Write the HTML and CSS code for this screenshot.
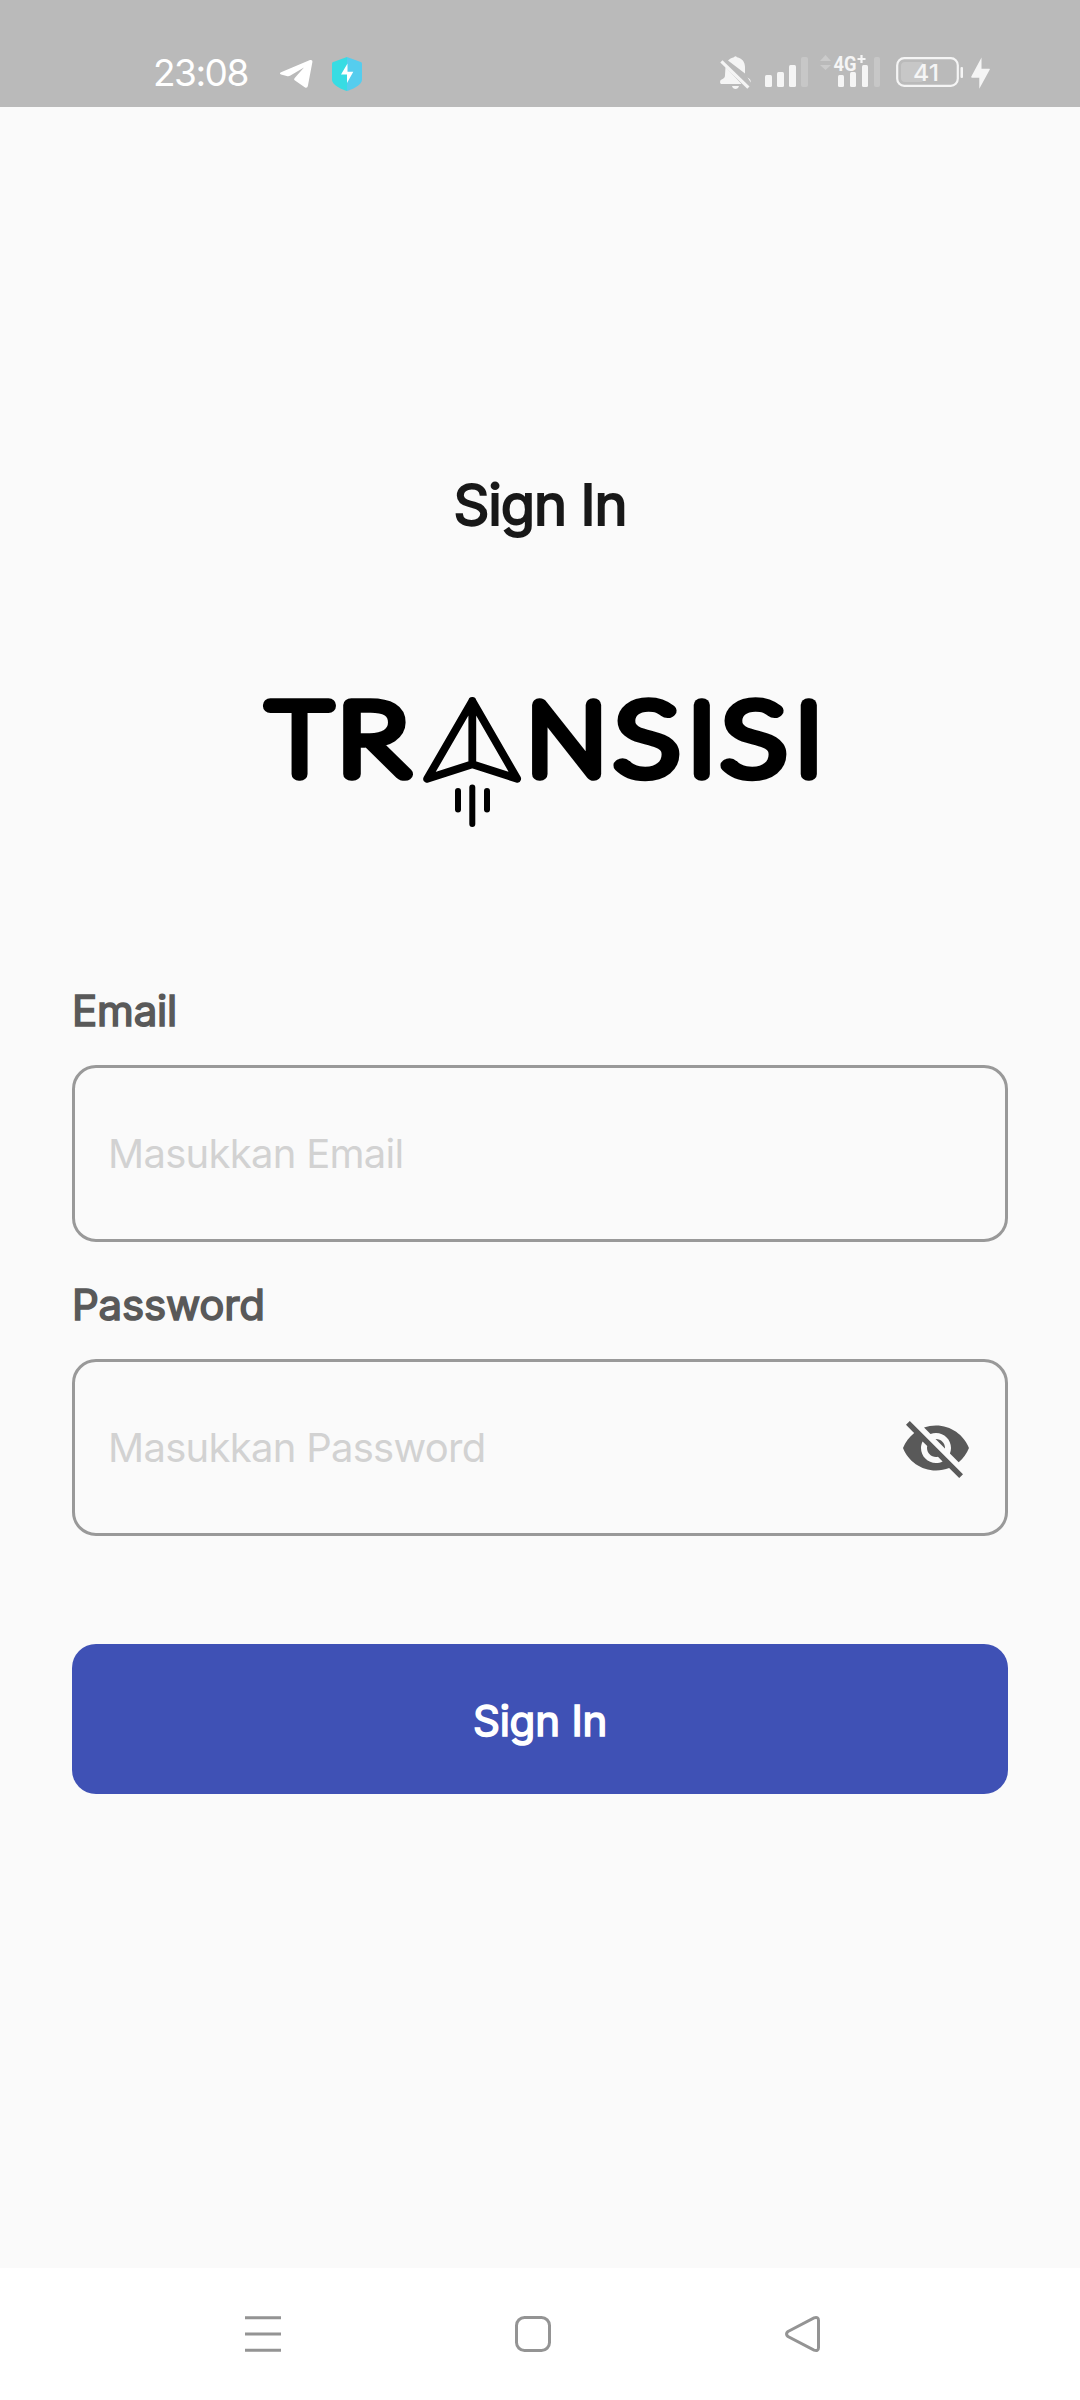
FILE: index.html
```html
<!DOCTYPE html>
<html lang="id">
<head>
<meta charset="utf-8">
<title>Sign In</title>
<link rel="stylesheet" href="styles.css">
</head>
<body>
<div class="screen">
  <header class="status">
    <span class="clock">23:08</span>
    <svg class="ic-telegram" width="34" height="32" viewBox="0 0 34 32"><path fill="#fff" d="M2 13.2 31 1.1c1.5-.6 2.7.2 2.4 2l-4.5 23.7c-.4 1.9-1.6 2.4-3.2 1.4L16 21.500c-1.200-.8-1-1.800-.3-2.600l9.300-10.300-14 8.100c-1.200.6-2.200.6-3.300.2L2 15.400c-1.400-.6-1.300-1.600 0-2.200z"/></svg>
    <svg class="ic-shield" width="30" height="34" viewBox="0 0 30 34"><path fill="#37dce3" d="M15 0v34C11 33 0 28 0 23V7C0 5.600.5 5.200 2 4.700z"/><path fill="#55cdee" d="M15 0v34c4-1 15-6 15-11V7c0-1.400-.5-1.800-2-2.300z"/><path fill="#fff" d="M15.500 6.500 9 17.500h6V26l6.300-11.200H15.500z"/></svg>
    <div class="status-right">
      <svg width="31" height="34" viewBox="0 0 31 34"><path fill="#f5f5f5" d="M8 5.500C10 3.500 12 2.600 14 2.200a2 2 0 0 1 3 0C22 3 25 7 25 12v6.500zM5.500 12 21.500 29H1.200C-.2 29-.2 26 .7 25c3-1.500 4.300-2 4.300-5zM26.500 21c1 2.500 4.500 2 4.300 6.500zM12 31h7c-.8 4-6.200 4-7 0z"/><path stroke="#f5f5f5" stroke-width="3.200" d="m1.400 6.400 27 26.200"/></svg>
      <svg class="ic-signal" width="43" height="34" viewBox="0 0 43 34"><g fill="#f5f5f5"><rect y="20" width="7" height="12" rx="1.500"/><rect x="12" y="17" width="7" height="15" rx="1.500"/><rect x="24" y="10" width="7" height="22" rx="1.500"/></g><rect x="36" y="2" width="7" height="30" rx="2" fill="#c7c7c7"/></svg>
      <svg class="ic-data" width="60" height="36" viewBox="0 0 60 36"><path fill="#cbcbcb" d="m0 8 5.500-6L11 8zM0 12h11l-5.500 5z"/><rect x="54" y="4" width="6" height="30" rx="2" fill="#c7c7c7"/><g fill="#f5f5f5"><rect x="18" y="22" width="6" height="12" rx="1.500"/><rect x="30" y="19" width="6" height="15" rx="1.500"/><rect x="42" y="12" width="6" height="22" rx="1.500"/></g><text class="net" x="13.500" y="17.500" textLength="23" lengthAdjust="spacingAndGlyphs">4G</text><path stroke="#f5f5f5" stroke-width="2.200" d="M41.500 2v8M37.500 6h8"/></svg>
      <svg class="ic-battery" width="67" height="30" viewBox="0 0 67 30"><rect x="5" y="5" width="23" height="20" rx="4" fill="#c7c7c7"/><rect x="1.200" y="1.200" width="60.600" height="27.600" rx="7" fill="none" stroke="#f5f5f5" stroke-width="2.200"/><rect x="64.500" y="10" width="2.500" height="11" rx="1" fill="#f5f5f5"/><text class="pct" x="17" y="24" textLength="26" lengthAdjust="spacingAndGlyphs">41</text></svg>
      <svg class="ic-bolt" width="19" height="32" viewBox="0 0 19 32"><path fill="#f5f5f5" d="M10.500.5.300 19.500c-.3.700 0 1.200.7 1.200h7.300v11L18.700 12.800c.3-.7 0-1.100-.7-1.100h-7.500z"/></svg>
    </div>
  </header>

  <main class="content">
    <h1 class="title">Sign In</h1>
    <svg class="logo" width="600" height="160" viewBox="240 670 600 160">
      <g class="wordmark">
        <text transform="translate(268.800 774) scale(1.090 1)">T</text>
        <text transform="translate(337.500 774) scale(1.200 1)">R</text>
        <text transform="translate(527 774) scale(1.070 1)">N</text>
        <text transform="translate(615 774) scale(1.220 1)">S</text>
        <text transform="translate(688.500 774) scale(1.100 1)">I</text>
        <text transform="translate(722 774) scale(1.220 1)">S</text>
        <text transform="translate(795.500 774) scale(1.100 1)">I</text>
      </g>
      <g class="plane">
        <path d="M472.300 701 427.200 778.800 472.300 764.200 517.200 778.800zM472.300 701v63"/>
        <path class="trail" d="M458 791v18.500M472.300 787.500v36.500M487 791v18.500"/>
      </g>
    </svg>
    <label class="label" for="email">Email</label>
    <div class="field"><input id="email" type="text" placeholder="Masukkan Email"></div>
    <label class="label" for="password">Password</label>
    <div class="field">
      <input id="password" type="password" placeholder="Masukkan Password">
      <svg class="eye" width="72" height="72" viewBox="0 0 24 24"><path d="M12 7c2.760 0 5 2.240 5 5 0 .65-.13 1.260-.36 1.830l2.920 2.920c1.510-1.260 2.700-2.890 3.430-4.750-1.730-4.390-6-7.500-11-7.500-1.400 0-2.740.25-3.980.7l2.160 2.160C10.740 7.130 11.350 7 12 7zM2 4.270l2.280 2.280.46.46C3.080 8.300 1.780 10.020 1 12c1.730 4.390 6 7.500 11 7.500 1.550 0 3.030-.3 4.380-.84l.42.42L19.730 22 21 20.730 3.270 3 2 4.270zM7.530 9.800l1.550 1.550c-.05.21-.08.43-.08.65 0 1.660 1.340 3 3 3 .22 0 .44-.03.65-.08l1.550 1.550c-.67.33-1.410.53-2.200.53-2.760 0-5-2.240-5-5 0-.79.2-1.530.53-2.200zm4.310-.78l3.150 3.150.02-.16c0-1.660-1.340-3-3-3l-.17.01z"/></svg>
    </div>
    <button class="submit" type="button">Sign In</button>
  </main>

  <nav class="navbar">
    <svg width="36" height="36" viewBox="0 0 36 36"><path d="M0 1.700h36M0 18h36M0 34.300h36"/></svg>
    <svg width="36" height="36" viewBox="0 0 36 36"><rect x="1.500" y="1.500" width="33" height="33" rx="8"/></svg>
    <svg width="36" height="36" viewBox="0 0 36 36"><path d="M3 15.500 29 1.900q4.500-1.500 4.500 2.600v27q0 4.100-4.500 2.600L3 20.500q-3-2.500 0-5z"/></svg>
  </nav>
</div>
</body>
</html>
```
FILE: styles.css
```css
* { box-sizing: border-box; }
body { margin: 0; background: #fafafa; font-family: Inter, "Liberation Sans", sans-serif; }
.screen { width: 1080px; height: 2400px; display: flex; flex-direction: column; }
svg { display: block; flex: none; }

.status { height: 107px; flex: none; background: #bababa; display: flex; align-items: flex-start; padding: 55px 90px 0 153px; }
.clock { color: #fff; font-size: 37px; line-height: 36px; width: 126px; white-space: nowrap; letter-spacing: -1.500px; }
.ic-telegram { margin-top: 4px; }
.ic-shield { margin: 2px 0 0 19px; }
.status-right { margin-left: auto; display: flex; align-items: flex-start; }
.ic-signal { margin-left: 14px; }
.ic-data { margin: -2px 0 0 12px; }
.ic-battery { margin: 2px 0 0 16px; }
.ic-bolt { margin: 2px 0 0 8px; }
.net { font: 700 20px Roboto, sans-serif; fill: #f5f5f5; stroke: #bababa; stroke-width: 1.5px; paint-order: stroke; }
.pct { font: 500 23px Inter, sans-serif; fill: #f5f5f5; }

.content { flex: 1; padding: 0 72px; display: flex; flex-direction: column; }
.title { margin: 364px 0 0; text-align: center; font-size: 56px; line-height: 68px; font-weight: 400; letter-spacing: -1.100px; color: #181818; -webkit-text-stroke: 2px #181818; }
.logo { align-self: center; margin-top: 131px; }
.wordmark { font: 100 99px Lato, sans-serif; fill: #000; stroke: #000; stroke-width: 13.500px; stroke-linejoin: round; }
.plane { fill: none; stroke: #000; stroke-width: 7.800px; stroke-linejoin: round; stroke-linecap: round; }
.trail { stroke-width: 6px; }
.label { font-size: 42px; line-height: 52px; letter-spacing: -.2px; color: #595959; -webkit-text-stroke: 1.600px #595959; }
.logo + .label { margin-top: 155px; }
.field { height: 177px; margin-top: 28px; border: 3px solid #999; border-radius: 24px; display: flex; align-items: center; padding: 0 33px; }
.field + .label { margin-top: 37px; }
.field input { flex: 1; min-width: 0; border: 0; outline: 0; padding: 0; background: transparent; font: 400 40px Inter, sans-serif; letter-spacing: -.72px; color: #181818; }
.field input::placeholder { color: #d2d2d2; opacity: 1; }
.eye { fill: #595959; }
.submit { height: 150px; margin-top: 108px; border: 0; border-radius: 24px; background: #3f51b5; color: #fff; font: 400 42px Inter, sans-serif; letter-spacing: -.2px; -webkit-text-stroke: 1.600px #fff; padding: 2px 0 0; }

.navbar { height: 132px; flex: none; background: #fff; display: flex; justify-content: space-between; align-items: flex-start; padding: 48px 259px 0 245px; }
.navbar svg { fill: none; stroke: #949494; stroke-width: 3px; }
```
